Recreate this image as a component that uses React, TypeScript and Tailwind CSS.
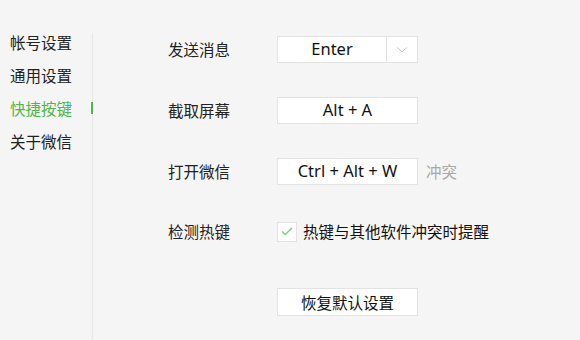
import type { FC, ReactNode } from 'react';

const cjk = { fontFamily: '"Noto Sans CJK SC", "Noto Sans", sans-serif' };
const latin = { fontFamily: '"Noto Sans", "Noto Sans CJK SC", sans-serif' };

const menu = ['帐号设置', '通用设置', '快捷按键', '关于微信'];

// 一行：左边标签，右边控件
const Row: FC<{ label: string; className?: string; children: ReactNode }> = ({ label, className = '', children }) => (
    <div className={`flex items-center ${className}`}>
        <span className="w-[109px] text-[15.5px] text-[#222]">{label}</span>
        {children}
    </div>
);

const KeyBox: FC<{ children: ReactNode }> = ({ children }) => (
    <div
        className="w-[141px] h-[27px] bg-white border border-[#e3e3e3] flex items-center justify-center text-[16.5px] text-[#111]"
        style={latin}
    >
        {children}
    </div>
);

export default function App() {
    return (
        <div className="w-[580px] h-[340px] bg-[#f5f5f5] flex overflow-hidden" style={cjk}>
            {/* 侧边菜单 */}
            <nav className="w-[92px] pt-[26px] pl-[10px]">
                {menu.map(item => (
                    <div
                        key={item}
                        className={`h-[33px] flex items-center text-[15.5px] ${item === '快捷按键' ? 'text-[#4cb84c]' : 'text-[#222]'}`}
                    >
                        {item}
                    </div>
                ))}
            </nav>

            {/* 分隔线 */}
            <div className="relative w-px mt-[33px] bg-[#e6e6e6]">
                <div className="absolute left-[-1px] top-[69px] w-[2px] h-[12px] bg-[#4cb84c]" />
            </div>

            <div className="flex flex-col pl-[75px] pt-[36px]">
                <Row label="发送消息">
                    <div className="w-[141px] h-[27px] bg-white border border-[#e3e3e3] flex" style={latin}>
                        <div className="flex-1 flex items-center justify-center text-[16.5px] text-[#111]">Enter</div>
                        <div className="w-[31px] border-l border-[#e3e3e3] flex items-center justify-center">
                            <svg width="10" height="6" viewBox="0 0 10 6" fill="none" stroke="#c4c4c4" strokeWidth="1">
                                <path d="M0.5 0.5 L5 5 L9.5 0.5" />
                            </svg>
                        </div>
                    </div>
                </Row>

                <Row label="截取屏幕" className="mt-[34px]">
                    <KeyBox>Alt + A</KeyBox>
                </Row>

                <Row label="打开微信" className="mt-[34px]">
                    <KeyBox>Ctrl + Alt + W</KeyBox>
                    <span className="ml-[8px] text-[15.5px] text-[#a8a8a8]">冲突</span>
                </Row>

                <Row label="检测热键" className="mt-[35px]">
                    <div className="w-[20px] h-[20px] bg-white border border-[#e3e3e3] flex items-center justify-center">
                        <svg width="12" height="9" viewBox="0 0 12 9" fill="none" stroke="#7fcf86" strokeWidth="1.4">
                            <path d="M1 4.5 L4.3 7.6 L11 1" />
                        </svg>
                    </div>
                    <span className="ml-[6px] text-[15.5px] text-[#111]">热键与其他软件冲突时提醒</span>
                </Row>

                <div className="mt-[45px] ml-[109px] w-[141px] h-[28px] bg-white border border-[#e3e3e3] flex items-center justify-center text-[15.5px] text-[#111]">
                    恢复默认设置
                </div>
            </div>
        </div>
    );
}
